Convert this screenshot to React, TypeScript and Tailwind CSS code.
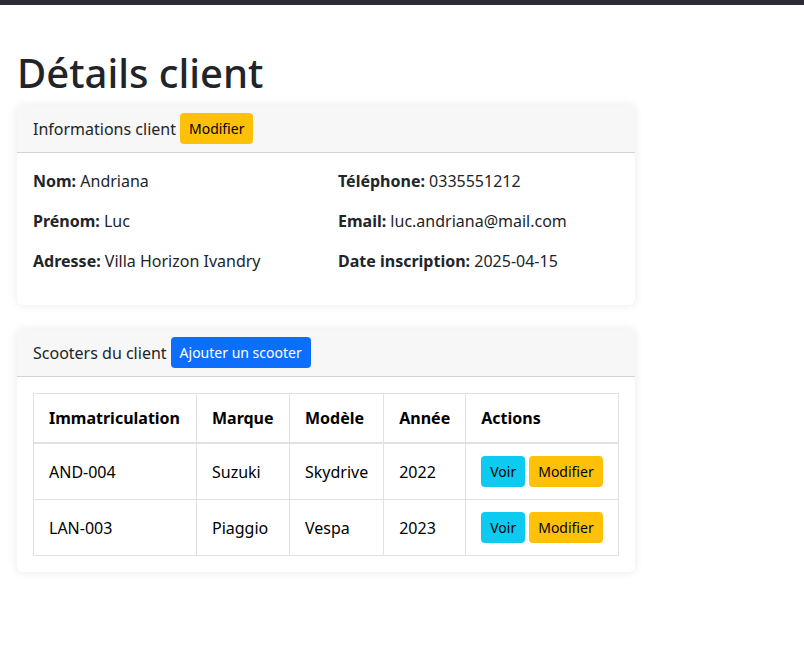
import React from "react";

const btn = "inline-block align-middle px-2 py-1 text-sm leading-[21px] rounded-[4px] border border-transparent";

export default function App() {
  const rows = [
    ["AND-004", "Suzuki", "Skydrive", "2022"],
    ["LAN-003", "Piaggio", "Vespa", "2023"],
  ];
  return (
    <div className="min-h-[666px] bg-white text-[#212529] text-base leading-6" style={{ fontFamily: '"Noto Sans", "DejaVu Sans", sans-serif' }}>
      <div className="h-[5px] bg-[#2b2b35]" />
      <div className="ml-[17px] w-[618px] pt-[44px]">
        <h1 className="text-[40px] leading-[48px] font-medium mb-2">Détails client</h1>

        <div className="rounded-[6px] bg-white shadow-[0_0_10px_rgba(0,0,0,0.09)]">
          <div className="bg-[#f7f7f7] border-b border-[#d3d3d3] rounded-t-[6px] px-4 py-2 flex items-center gap-1">
            <span>Informations client</span>
            <button className={`${btn} bg-[#ffc107] text-black`}>Modifier</button>
          </div>
          <div className="p-4 grid grid-cols-2 gap-x-6">
            <div>
              <p className="mb-4"><strong className="font-bold">Nom:</strong> Andriana</p>
              <p className="mb-4"><strong className="font-bold">Prénom:</strong> Luc</p>
              <p className="mb-4"><strong className="font-bold">Adresse:</strong> Villa Horizon Ivandry</p>
            </div>
            <div>
              <p className="mb-4"><strong className="font-bold">Téléphone:</strong> 0335551212</p>
              <p className="mb-4"><strong className="font-bold">Email:</strong> luc.andriana@mail.com</p>
              <p className="mb-4"><strong className="font-bold">Date inscription:</strong> 2025-04-15</p>
            </div>
          </div>
        </div>

        <div className="mt-6 rounded-[6px] bg-white shadow-[0_0_10px_rgba(0,0,0,0.09)]">
          <div className="bg-[#f7f7f7] border-b border-[#d3d3d3] rounded-t-[6px] px-4 py-2 flex items-center gap-1">
            <span>Scooters du client</span>
            <button className={`${btn} bg-[#0d6efd] text-white`}>Ajouter un scooter</button>
          </div>
          <div className="p-4">
            <table className="w-full border-collapse text-left text-black">
              <thead>
                <tr className="border-b-2 border-[#dee2e6]">
                  <th className="w-[163px] border border-[#dee2e6] px-[15px] py-3 font-bold">Immatriculation</th>
                  <th className="w-[93px] border border-[#dee2e6] px-[15px] py-3 font-bold">Marque</th>
                  <th className="w-[94px] border border-[#dee2e6] px-[15px] py-3 font-bold">Modèle</th>
                  <th className="w-[82px] border border-[#dee2e6] px-[15px] py-3 font-bold">Année</th>
                  <th className="border border-[#dee2e6] px-[15px] py-3 font-bold">Actions</th>
                </tr>
              </thead>
              <tbody>
                {rows.map((r) => (
                  <tr key={r[0]}>
                    {r.map((c, i) => (
                      <td key={i} className="border border-[#dee2e6] px-[15px] py-3 align-middle">{c}</td>
                    ))}
                    <td className="border border-[#dee2e6] px-[15px] py-3 align-middle">
                      <div className="flex gap-1">
                        <button className={`${btn} bg-[#0dcaf0] text-black`}>Voir</button>
                        <button className={`${btn} bg-[#ffc107] text-black`}>Modifier</button>
                      </div>
                    </td>
                  </tr>
                ))}
              </tbody>
            </table>
          </div>
        </div>
      </div>
    </div>
  );
}
